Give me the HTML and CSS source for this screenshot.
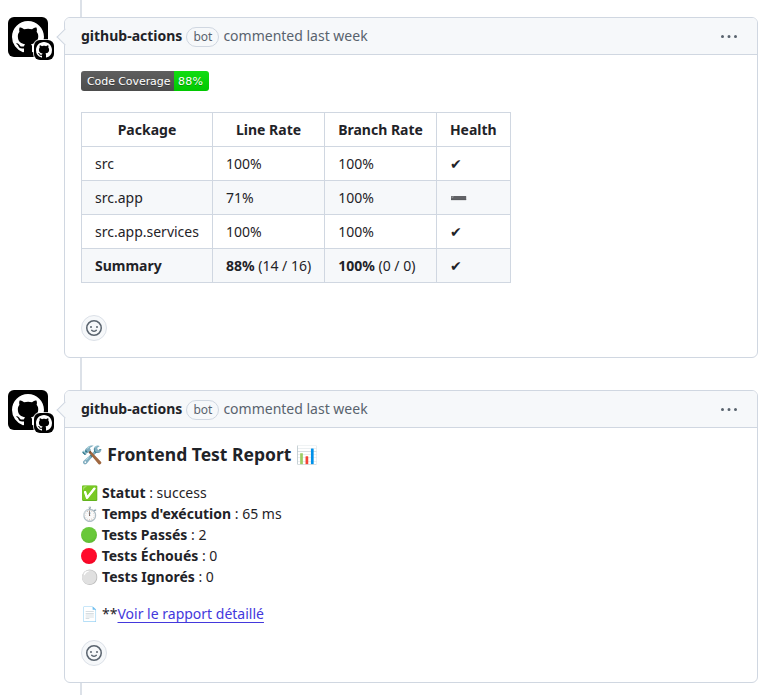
FILE: index.html
```html
<!DOCTYPE html>
<html lang="en">
<head>
<meta charset="utf-8">
<title>Pull request conversation</title>
<link rel="stylesheet" href="styles.css">
</head>
<body>
<svg class="defs" width="0" height="0" aria-hidden="true">
  <symbol id="mark" viewBox="0 0 16 16"><path d="M8 0c4.42 0 8 3.58 8 8a8.013 8.013 0 0 1-5.45 7.59c-.4.08-.55-.17-.55-.38 0-.27.01-1.13.01-2.2 0-.75-.25-1.23-.54-1.48 1.78-.2 3.65-.88 3.65-3.95 0-.88-.31-1.59-.82-2.15.08-.2.36-1.02-.08-2.12 0 0-.67-.22-2.2.82-.64-.18-1.32-.27-2-.27-.68 0-1.36.09-2 .27-1.53-1.03-2.2-.82-2.2-.82-.44 1.1-.16 1.92-.08 2.12-.51.56-.82 1.28-.82 2.15 0 3.06 1.86 3.75 3.64 3.95-.23.2-.44.55-.51 1.07-.46.21-1.61.55-2.33-.66-.15-.24-.6-.83-1.23-.82-.67.01-.27.38.01.53.34.19.73.9.82 1.13.16.45.68 1.31 2.69.94 0 .67.01 1.3.01 1.49 0 .21-.15.45-.55.38A7.995 7.995 0 0 1 0 8c0-4.42 3.58-8 8-8Z"/></symbol>
  <symbol id="smiley" viewBox="0 0 16 16"><path d="M8 0a8 8 0 1 1 0 16A8 8 0 0 1 8 0ZM1.5 8a6.5 6.5 0 1 0 13 0 6.5 6.5 0 0 0-13 0Zm3.82 1.636a.75.75 0 0 1 1.038.175l.007.009c.103.118.22.222.35.31.264.178.683.37 1.285.37.602 0 1.02-.192 1.285-.371.13-.088.247-.192.35-.31l.007-.008a.75.75 0 0 1 1.222.87c-.2.26-.45.49-.735.68-.63.418-1.37.638-2.127.629-.946 0-1.652-.308-2.126-.63a3.331 3.331 0 0 1-.715-.657.75.75 0 0 1 .16-1.047ZM12 7a1 1 0 1 1-2 0 1 1 0 0 1 2 0ZM5 8a1 1 0 1 1 0-2 1 1 0 0 1 0 2Z"/></symbol>
  <symbol id="kebab" viewBox="0 0 16 16"><path d="M8 9a1.5 1.5 0 1 0 0-3 1.5 1.5 0 0 0 0 3ZM1.5 9a1.5 1.5 0 1 0 0-3 1.5 1.5 0 0 0 0 3Zm13 0a1.5 1.5 0 1 0 0-3 1.5 1.5 0 0 0 0 3Z"/></symbol>
</svg>
<main class="timeline">
  <article class="item">
    <div class="avatar"><svg class="mark"><use href="#mark"/></svg><span class="avatar-badge"><svg><use href="#mark"/></svg></span></div>
    <section class="comment coverage">
      <header class="comment-header"><strong>github-actions</strong><span class="bot">bot</span><span class="when">commented last week</span><svg class="kebab"><use href="#kebab"/></svg></header>
      <div class="comment-body">
        <div class="shield"><span class="shield-label">Code Coverage</span><span class="shield-value">88%</span></div>
        <table>
          <thead><tr><th>Package</th><th>Line Rate</th><th>Branch Rate</th><th>Health</th></tr></thead>
          <tbody>
            <tr><td>src</td><td>100%</td><td>100%</td><td class="check">✔</td></tr>
            <tr><td>src.app</td><td>71%</td><td>100%</td><td>➖</td></tr>
            <tr><td>src.app.services</td><td>100%</td><td>100%</td><td class="check">✔</td></tr>
            <tr><td><b>Summary</b></td><td><b>88%</b> (14 / 16)</td><td><b>100%</b> (0 / 0)</td><td class="check">✔</td></tr>
          </tbody>
        </table>
        <button class="react" aria-label="Add reaction"><svg><use href="#smiley"/></svg></button>
      </div>
    </section>
  </article>
  <article class="item">
    <div class="avatar"><svg class="mark"><use href="#mark"/></svg><span class="avatar-badge"><svg><use href="#mark"/></svg></span></div>
    <section class="comment report">
      <header class="comment-header"><strong>github-actions</strong><span class="bot">bot</span><span class="when">commented last week</span><svg class="kebab"><use href="#kebab"/></svg></header>
      <div class="comment-body">
        <h3>🛠️ Frontend Test Report 📊</h3>
        <p><span class="vivid">✅</span> <b>Statut</b> : success<br>⏱️ <b>Temps d'exécution</b> : 65 ms<br><span class="dot green"></span> <b>Tests Passés</b> : 2<br><span class="dot red"></span> <b>Tests Échoués</b> : 0<br>⚪ <b>Tests Ignorés</b> : 0</p>
        <p>📄 **<a href="#">Voir le rapport détaillé</a></p>
        <button class="react" aria-label="Add reaction"><svg><use href="#smiley"/></svg></button>
      </div>
    </section>
  </article>
</main>
</body>
</html>
```
FILE: styles.css
```css
* { box-sizing: border-box; }
html, body { height: 100%; }
body { margin: 0; overflow: hidden; background: #fff; color: #1f2328; font: 14px/21px "Noto Sans", "Noto Color Emoji", sans-serif; }
.defs { position: absolute; }
svg { display: block; fill: currentColor; }
.timeline { height: 695px; padding: 17px 24px 0 8px; display: flex; flex-direction: column; gap: 32px; background: linear-gradient(#dce1e8, #dce1e8) 80px 0 / 2px 100% no-repeat; }
.item { display: flex; gap: 16px; }
.avatar { position: relative; flex: none; width: 40px; height: 40px; padding: 4px; border-radius: 6px; background: #000; color: #fff; }
.mark { width: 32px; height: 32px; }
.avatar-badge { position: absolute; left: 26px; top: 23px; width: 20px; height: 20px; padding: 2px; border-radius: 6px; background: #000; box-shadow: 0 0 0 1px rgba(255, 255, 255, .8); }
.avatar-badge svg { width: 16px; height: 16px; }
.comment { position: relative; flex: 1; border: 1px solid #d0d7e1; border-radius: 6px; background: #fff; }
.coverage { height: 341px; }
.report { height: 293px; }
.comment::before { content: ""; position: absolute; left: -6px; top: 13px; width: 11px; height: 11px; border: solid #d0d7e1; border-width: 0 0 1px 1px; background: #f6f8fa; transform: rotate(45deg); }
.comment-header { display: flex; align-items: center; height: 37px; padding: 0 20px 1px 16px; border-bottom: 1px solid #d0d7e1; border-radius: 5px 5px 0 0; background: #f6f8fa; }
.comment-header strong { font-weight: 700; }
.bot { margin: 2px 4px 0 4px; height: 20px; padding: 0 6px; border: 1px solid #d0d7e1; border-radius: 10px; font-size: 12px; line-height: 18px; color: #59636e; }
.when { color: #59636e; }
.kebab { width: 16px; height: 16px; margin: 2px 0 0 auto; color: #59636e; }
.comment-body { padding: 16px; }
.shield { display: flex; width: 128px; height: 20px; border-radius: 3px; overflow: hidden; color: #fff; font: 11px/21px "DejaVu Sans", sans-serif; text-shadow: 0 1px 0 rgba(1, 1, 1, .3); }
.shield-label { width: 93px; padding-left: 6px; letter-spacing: -.08px; background: linear-gradient(#5f5f5f, #4c4c4c); }
.shield-value { flex: 1; padding-left: 4px; letter-spacing: .3px; background: linear-gradient(#12dc12, #00c800); }
table { margin: 21px 0 32px; border-collapse: collapse; }
th, td { padding: 6px 13px; border: 1px solid #d0d7e1; text-align: left; }
th { font-weight: 700; text-align: center; }
.check { padding-top: 2px; padding-bottom: 0; font-family: "DejaVu Sans", sans-serif; }
b { font-weight: 700; }
tbody tr:nth-child(even) { background: #f6f8fa; }
h3 { margin: -1px 0 17px; font-size: 17.5px; line-height: 22px; font-weight: 700; }
p { margin: 0 0 16px; }
a { color: #4338dc; text-underline-offset: 3px; }
.vivid { filter: saturate(1.35) brightness(1.08); }
.dot { display: inline-block; width: 16px; height: 16px; margin-right: 1px; border-radius: 50%; vertical-align: -3px; }
.green { background: radial-gradient(circle at 45% 35%, #69c83a 50%, #55aa2a); }
.red { background: radial-gradient(circle at 45% 35%, #ff0a2b 50%, #e3001c); }
.react { display: flex; align-items: center; justify-content: center; width: 26px; height: 26px; padding: 0; border: 1px solid #dce1e8; border-radius: 50%; background: #f6f8fa; color: #59636e; }
.react svg { width: 16px; height: 16px; }
```
